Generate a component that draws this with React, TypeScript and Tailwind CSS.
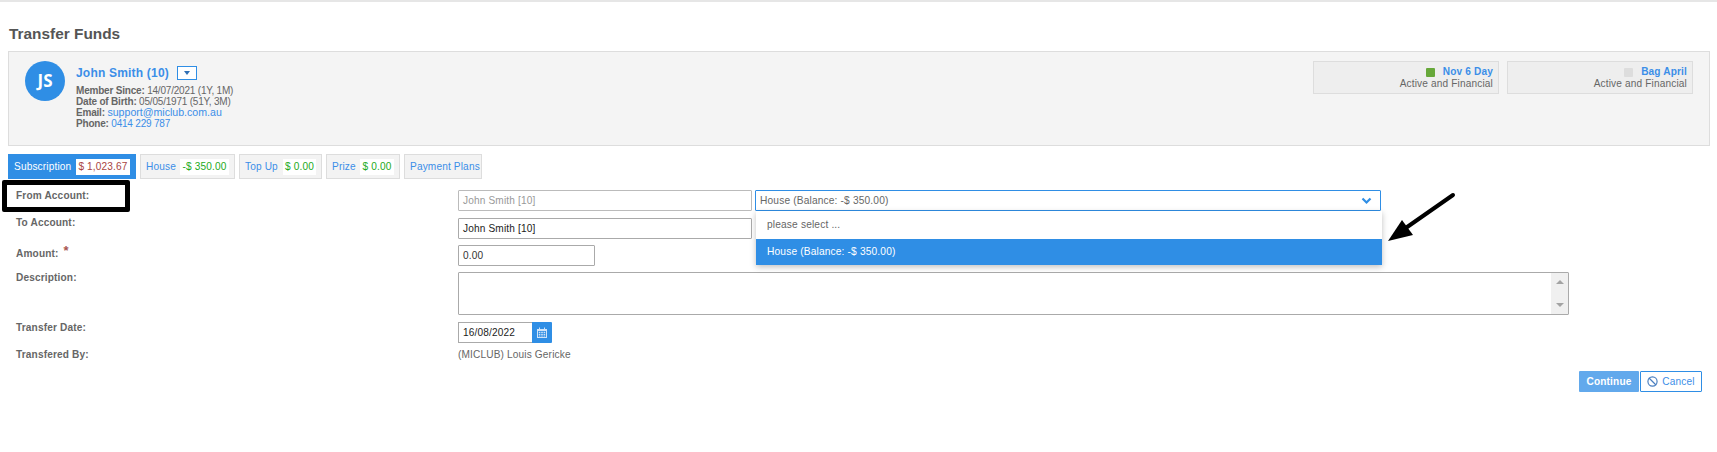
import { Ban } from "lucide-react";

const Tab = ({ label, value, valueCls, w, bw, active }: { label: string; value?: string; valueCls?: string; w: string; bw?: string; active?: boolean }) => (
  <div className={`${w} h-[25px] flex items-center justify-between whitespace-nowrap pl-[5px] pr-[5px] border ${active ? "bg-[#2f8ee5] border-[#2f8ee5] text-white" : "bg-[#f3f3f3] border-[#dddddd] text-[#3b8ee8]"}`}>
    <span>{label}</span>
    {value && <span className={`${bw} h-[16px] bg-white flex items-center justify-center ${valueCls}`}>{value}</span>}
  </div>
);

const Membership = ({ title, sq }: { title: string; sq: string }) => (
  <div className="w-[186px] h-[33px] bg-[#eeeeee] border border-[#dddddd] pr-[5px] pt-[4px] text-right leading-[12px]">
    <div className="flex justify-end items-center h-[12px] gap-[8px]">
      <span className={`w-[9px] h-[9px] rounded-[1px] ${sq}`} />
      <span className="font-bold text-[#3b8ee8]">{title}</span>
    </div>
    <div className="text-[#666666]">Active and Financial</div>
  </div>
);

const Row = ({ label, h, labelCls, star, children }: { label: string; h: string; labelCls?: string; star?: boolean; children?: React.ReactNode }) => (
  <div className={`flex ${h}`}>
    <div className={`w-[442px] shrink-0 font-bold text-[#666666] leading-[12px] ${labelCls ?? ""}`}>
      {label}
      {star && <span className="text-[#a8554f] ml-[5px] text-[13px] relative top-[-2px]">*</span>}
    </div>
    <div className="flex-1 relative">{children}</div>
  </div>
);

const inputCls = "border border-[#aaaaaa] rounded-[1px] bg-white h-[21px] flex items-center px-[4px]";

export default function App() {
  return (
    <div className="relative w-[1717px] h-[452px] bg-white overflow-hidden text-[10.1px] tracking-[0.15px] text-[#666666]" style={{ fontFamily: '"Liberation Sans", Arial, sans-serif' }}>
      <div className="h-[2px] bg-[#e6e6e6]" />
      <div className="pl-[8px] pr-[7px]">
        <h1 className="mt-[23px] h-[26px] ml-[1px] text-[15.4px] leading-[18px] font-bold text-[#555555] tracking-normal">Transfer Funds</h1>

        <div className="h-[95px] bg-[#f4f4f4] border border-[#dddddd] flex justify-between pt-[9px] pl-[16px] pr-[16px]">
          <div className="flex">
            <div className="w-[40px] h-[40px] rounded-full bg-[#2f8ee5] text-white flex items-center justify-center text-[17px] font-bold tracking-normal" style={{ fontFamily: '"Open Sans", sans-serif' }}>JS</div>
            <div className="ml-[11px]">
              <div className="flex items-center h-[24px]">
                <span className="text-[12px] font-bold text-[#3b8ee8] tracking-[0.2px]">John Smith (10)</span>
                <span className="ml-[8px] w-[20px] h-[14px] border border-[#2f8ee5] bg-white flex items-center justify-center">
                  <span className="w-0 h-0 border-x-[3.5px] border-x-transparent border-t-[4px] border-t-[#2f6fb5]" />
                </span>
              </div>
              <div className="leading-[11px] text-[#666666] text-[10px] tracking-[-0.2px]">
                <div><b>Member Since:</b> 14/07/2021 (1Y, 1M)</div>
                <div><b>Date of Birth:</b> 05/05/1971 (51Y, 3M)</div>
                <div><b>Email:</b> <span className="text-[#3b8ee8] text-[10.6px] tracking-normal">support@miclub.com.au</span></div>
                <div><b>Phone:</b> <span className="text-[#3b8ee8]">0414 229 787</span></div>
              </div>
            </div>
          </div>
          <div className="flex gap-[8px]">
            <Membership title="Nov 6 Day" sq="bg-[#67a83a]" />
            <Membership title="Bag April" sq="bg-[#dddddd]" />
          </div>
        </div>

        <div className="mt-[8px] flex gap-[4px]">
          <Tab active label="Subscription" value="$ 1,023.67" valueCls="text-[#a94442]" w="w-[128px]" bw="w-[54px]" />
          <Tab label="House" value="-$ 350.00" valueCls="text-[#22aa22]" w="w-[95px]" bw="w-[49px]" />
          <Tab label="Top Up" value="$ 0.00" valueCls="text-[#22aa22]" w="w-[83px]" bw="w-[33px]" />
          <Tab label="Prize" value="$ 0.00" valueCls="text-[#22aa22]" w="w-[74px]" bw="w-[34px]" />
          <Tab label="Payment Plans" w="w-[78px]" />
        </div>

        <div className="mt-[11px] pl-[8px]">
          <Row label="From Account:" h="h-[28px]">
            <div className="flex gap-[3px]">
              <div className={`${inputCls} w-[294px] text-[#999999] border-[#bbbbbb]`}>John Smith [10]</div>
              <div className="w-[626px] h-[21px] border border-[#2f8ee5] rounded-[1px] bg-white flex items-center justify-between pl-[4px] pr-[8px] text-[#666666] text-[10.2px]">
                <span>House (Balance: -$ 350.00)</span>
                <svg width="11" height="8" viewBox="0 0 11 8"><path d="M1.5 1.5 L5.5 5.5 L9.5 1.5" fill="none" stroke="#2f8ee5" strokeWidth="2.2" /></svg>
              </div>
            </div>
            <div className="absolute z-10 left-[298px] top-[21px] w-[626px] h-[54px] bg-white shadow-[0_2px_6px_rgba(0,0,0,0.25)] text-[10.2px]">
              <div className="h-[28px] flex items-center pl-[11px] text-[#666666]">please select ...</div>
              <div className="h-[26px] flex items-center pl-[11px] bg-[#2f8ee5] text-white">House (Balance: -$ 350.00)</div>
            </div>
          </Row>
          <Row label="To Account:" labelCls="-mt-[1px]" h="h-[27px]">
            <div className={`${inputCls} w-[294px] text-[#222222]`}>John Smith [10]</div>
          </Row>
          <Row label="Amount:" labelCls="pt-[2px]" star h="h-[27px]">
            <div className={`${inputCls} w-[137px] text-[#333333]`}>0.00</div>
          </Row>
          <Row label="Description:" h="h-[50px]">
            <div className="w-[1111px] h-[43px] border border-[#aaaaaa] rounded-[1px] bg-white flex justify-end">
              <div className="w-[17px] bg-[#f0f0f0] flex flex-col items-center justify-between py-[7px]">
                <span className="w-0 h-0 border-x-[4px] border-x-transparent border-b-[4px] border-b-[#a3a3a3]" />
                <span className="w-0 h-0 border-x-[4px] border-x-transparent border-t-[4px] border-t-[#a3a3a3]" />
              </div>
            </div>
          </Row>
          <Row label="Transfer Date:" h="h-[28px]">
            <div className="flex w-[94px] h-[21px]">
              <div className="flex-1 border border-[#aaaaaa] border-r-0 flex items-center px-[4px] text-[#222222]">16/08/2022</div>
              <div className="w-[20px] bg-[#2f8ee5] rounded-r-[1px] flex items-center justify-center">
                <svg width="10" height="11" viewBox="0 0 10 11">
                  <path fillRule="evenodd" fill="#cfe3f8" d="M0 2 H2 V0.5 H3 V2 H7 V0.5 H8 V2 H10 V11 H0 Z M1 4 V10 H9 V4 Z" />
                  <path fill="#cfe3f8" d="M1.8 4.8 H3.4 V6 H1.8 Z M4.2 4.8 H5.8 V6 H4.2 Z M6.6 4.8 H8.2 V6 H6.6 Z M1.8 6.7 H3.4 V7.9 H1.8 Z M4.2 6.7 H5.8 V7.9 H4.2 Z M6.6 6.7 H8.2 V7.9 H6.6 Z M1.8 8.5 H3.4 V9.5 H1.8 Z M4.2 8.5 H5.8 V9.5 H4.2 Z M6.6 8.5 H8.2 V9.5 H6.6 Z" />
                </svg>
              </div>
            </div>
          </Row>
          <Row label="Transfered By:" labelCls="-mt-[1px]" h="h-[17px]">
            <div className="leading-[12px] -mt-[1px]">(MICLUB) Louis Gericke</div>
          </Row>
        </div>

        <div className="mt-[4px] flex justify-end pr-[8px] gap-[1px]">
          <button className="w-[60px] h-[21px] bg-[#62a9ec] rounded-[1px] text-white font-bold">Continue</button>
          <button className="w-[62px] h-[21px] border border-[#2f8ee5] rounded-[1px] bg-white text-[#3b8ee8] flex items-center justify-center gap-[4px]"><Ban size={11} strokeWidth={2.6} className="text-[#4a7fc0]" />Cancel</button>
        </div>
      </div>

      {/* annotations drawn over the screenshot */}
      <div className="absolute left-[2px] top-[180px] w-[128px] h-[32px] border-[5px] border-black rounded-[2px]" />
      <svg className="absolute left-[1380px] top-[185px]" width="85" height="65" viewBox="0 0 85 65">
        <path d="M73 10 L20 47" stroke="black" strokeWidth="4" strokeLinecap="round" />
        <polygon points="8,56 33,50 22,35" fill="black" />
      </svg>
    </div>
  );
}
